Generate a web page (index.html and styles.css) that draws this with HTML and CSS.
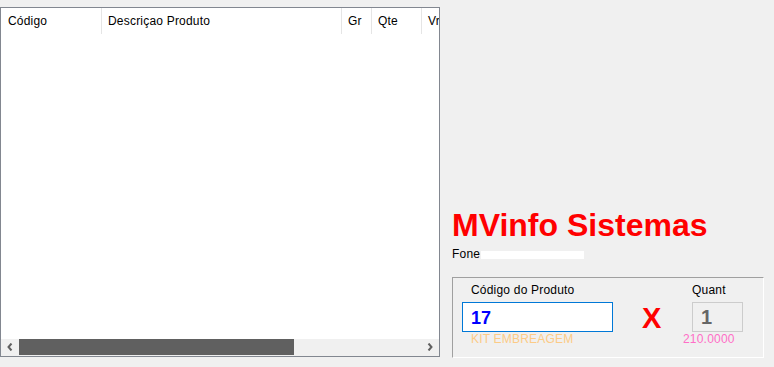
FILE: index.html
```html
<!DOCTYPE html>
<html lang="pt-BR">
<head>
  <meta charset="UTF-8" />
  <meta name="viewport" content="width=device-width, initial-scale=1.0" />
  <title>MVinfo Sistemas</title>
  <link rel="stylesheet" href="styles.css">
</head>
<body>
  <div class="window">
    <div class="grid">
      <div class="grid-head">
        <div class="col col-codigo">Código</div>
        <div class="col col-desc">Descriçao Produto</div>
        <div class="col col-gr">Gr</div>
        <div class="col col-qte">Qte</div>
        <div class="col col-vr">Vr</div>
      </div>
      <div class="grid-body"></div>
      <div class="hscroll">
        <div class="arrow">
          <svg width="6" height="8" viewBox="0 0 6 8"><polyline points="4.5,0.5 1.5,4 4.5,7.5" fill="none" stroke="#606060" stroke-width="2"/></svg>
        </div>
        <div class="thumb"></div>
        <div class="arrow arrow-right">
          <svg width="6" height="8" viewBox="0 0 6 8"><polyline points="1.5,0.5 4.5,4 1.5,7.5" fill="none" stroke="#606060" stroke-width="2"/></svg>
        </div>
      </div>
    </div>

    <div class="side">
      <div class="brand">MVinfo Sistemas</div>
      <div class="fone">Fone<span class="mask"></span></div>
      <div class="group">
        <div class="field">
          <div class="label">Código do Produto</div>
          <div class="code-box">17</div>
          <div class="hint">KIT EMBREAGEM</div>
        </div>
        <div class="times">X</div>
        <div class="field quant">
          <div class="label">Quant</div>
          <div class="quant-box">1</div>
          <div class="hint">210.0000</div>
        </div>
      </div>
    </div>
  </div>
</body>
</html>
```

FILE: styles.css
```css
body {
  margin: 0;
  background-color: #f0f0f0;
  font-family: "Liberation Sans", Arial, sans-serif;
  font-size: 12px;
  color: #000;
}

.window {
  display: flex;
  height: 367px;
}

/* grade de itens */
.grid {
  margin-top: 7px;
  width: 440px;
  height: 350px;
  box-sizing: border-box;
  border: 1px solid #828790;
  background-color: #fff;
  display: flex;
  flex-direction: column;
}

.grid-head {
  display: flex;
  height: 26px;
  line-height: 26px;
  letter-spacing: 0.2px;
  white-space: nowrap;
  overflow: hidden;
}

.col {
  flex: none;
  box-sizing: border-box;
  border-right: 1px solid #e5e5e5;
  padding-left: 6px;
}

.col-codigo {
  width: 101px;
  padding-left: 7px;
}

.col-desc {
  width: 240px;
}

.col-gr {
  width: 30px;
}

.col-qte {
  width: 50px;
}

.col-vr {
  flex: 1;
  border-right: none;
  overflow: hidden;
}

.grid-body {
  flex: 1;
}

.hscroll {
  height: 17px;
  background-color: #f0f0f0;
  display: flex;
}

.arrow {
  width: 18px;
  height: 16px;
  display: flex;
  align-items: center;
  justify-content: center;
}

.arrow-right {
  margin-left: auto;
}

.thumb {
  width: 275px;
  height: 16px;
  background-color: #606060;
}

/* lado direito */
.side {
  margin-left: 12px;
  padding-top: 209px;
  width: 322px;
}

.brand {
  font-size: 32px;
  font-weight: bold;
  color: #ff0000;
  line-height: 32px;
}

.fone {
  margin-top: 6px;
  line-height: 14px;
  letter-spacing: 0.2px;
}

.mask {
  display: inline-block;
  width: 103px;
  height: 8px;
  margin-left: 1px;
  margin-bottom: -1px;
  background-color: #fff;
}

.group {
  margin-top: 16px;
  width: 312px;
  height: 81px;
  box-sizing: border-box;
  border-top: 1px solid #a0a0a0;
  border-left: 1px solid #a0a0a0;
  border-right: 1px solid #fff;
  border-bottom: 1px solid #fff;
  padding: 5px 0 0 9px;
  display: flex;
}

.field {
  width: 151px;
}

.label {
  line-height: 14px;
  padding-left: 9px;
  margin-bottom: 5px;
  letter-spacing: 0.2px;
}

.code-box {
  height: 30px;
  box-sizing: border-box;
  border: 1px solid #0078d7;
  background-color: #fff;
  padding: 2px 0 0 8px;
  font-size: 18px;
  font-weight: bold;
  line-height: 26px;
  color: #0000ff;
}

.hint {
  line-height: 14px;
  padding-left: 9px;
  letter-spacing: 0.2px;
  color: #fccb86;
}

.times {
  width: 79px;
  box-sizing: border-box;
  padding-left: 29px;
  margin-top: 20px;
  font-size: 29px;
  font-weight: bold;
  line-height: 30px;
  color: #ff0000;
}

.quant {
  width: 60px;
}

.quant .label {
  padding-left: 0;
}

.quant-box {
  width: 51px;
  height: 30px;
  box-sizing: border-box;
  border: 1px solid #cccccc;
  background-color: #f0f0f0;
  padding-left: 8px;
  font-size: 20px;
  font-weight: bold;
  line-height: 28px;
  color: #666666;
}

.quant .hint {
  margin-left: -9px;
  padding-left: 0;
  color: #ff6ec7;
}
```
